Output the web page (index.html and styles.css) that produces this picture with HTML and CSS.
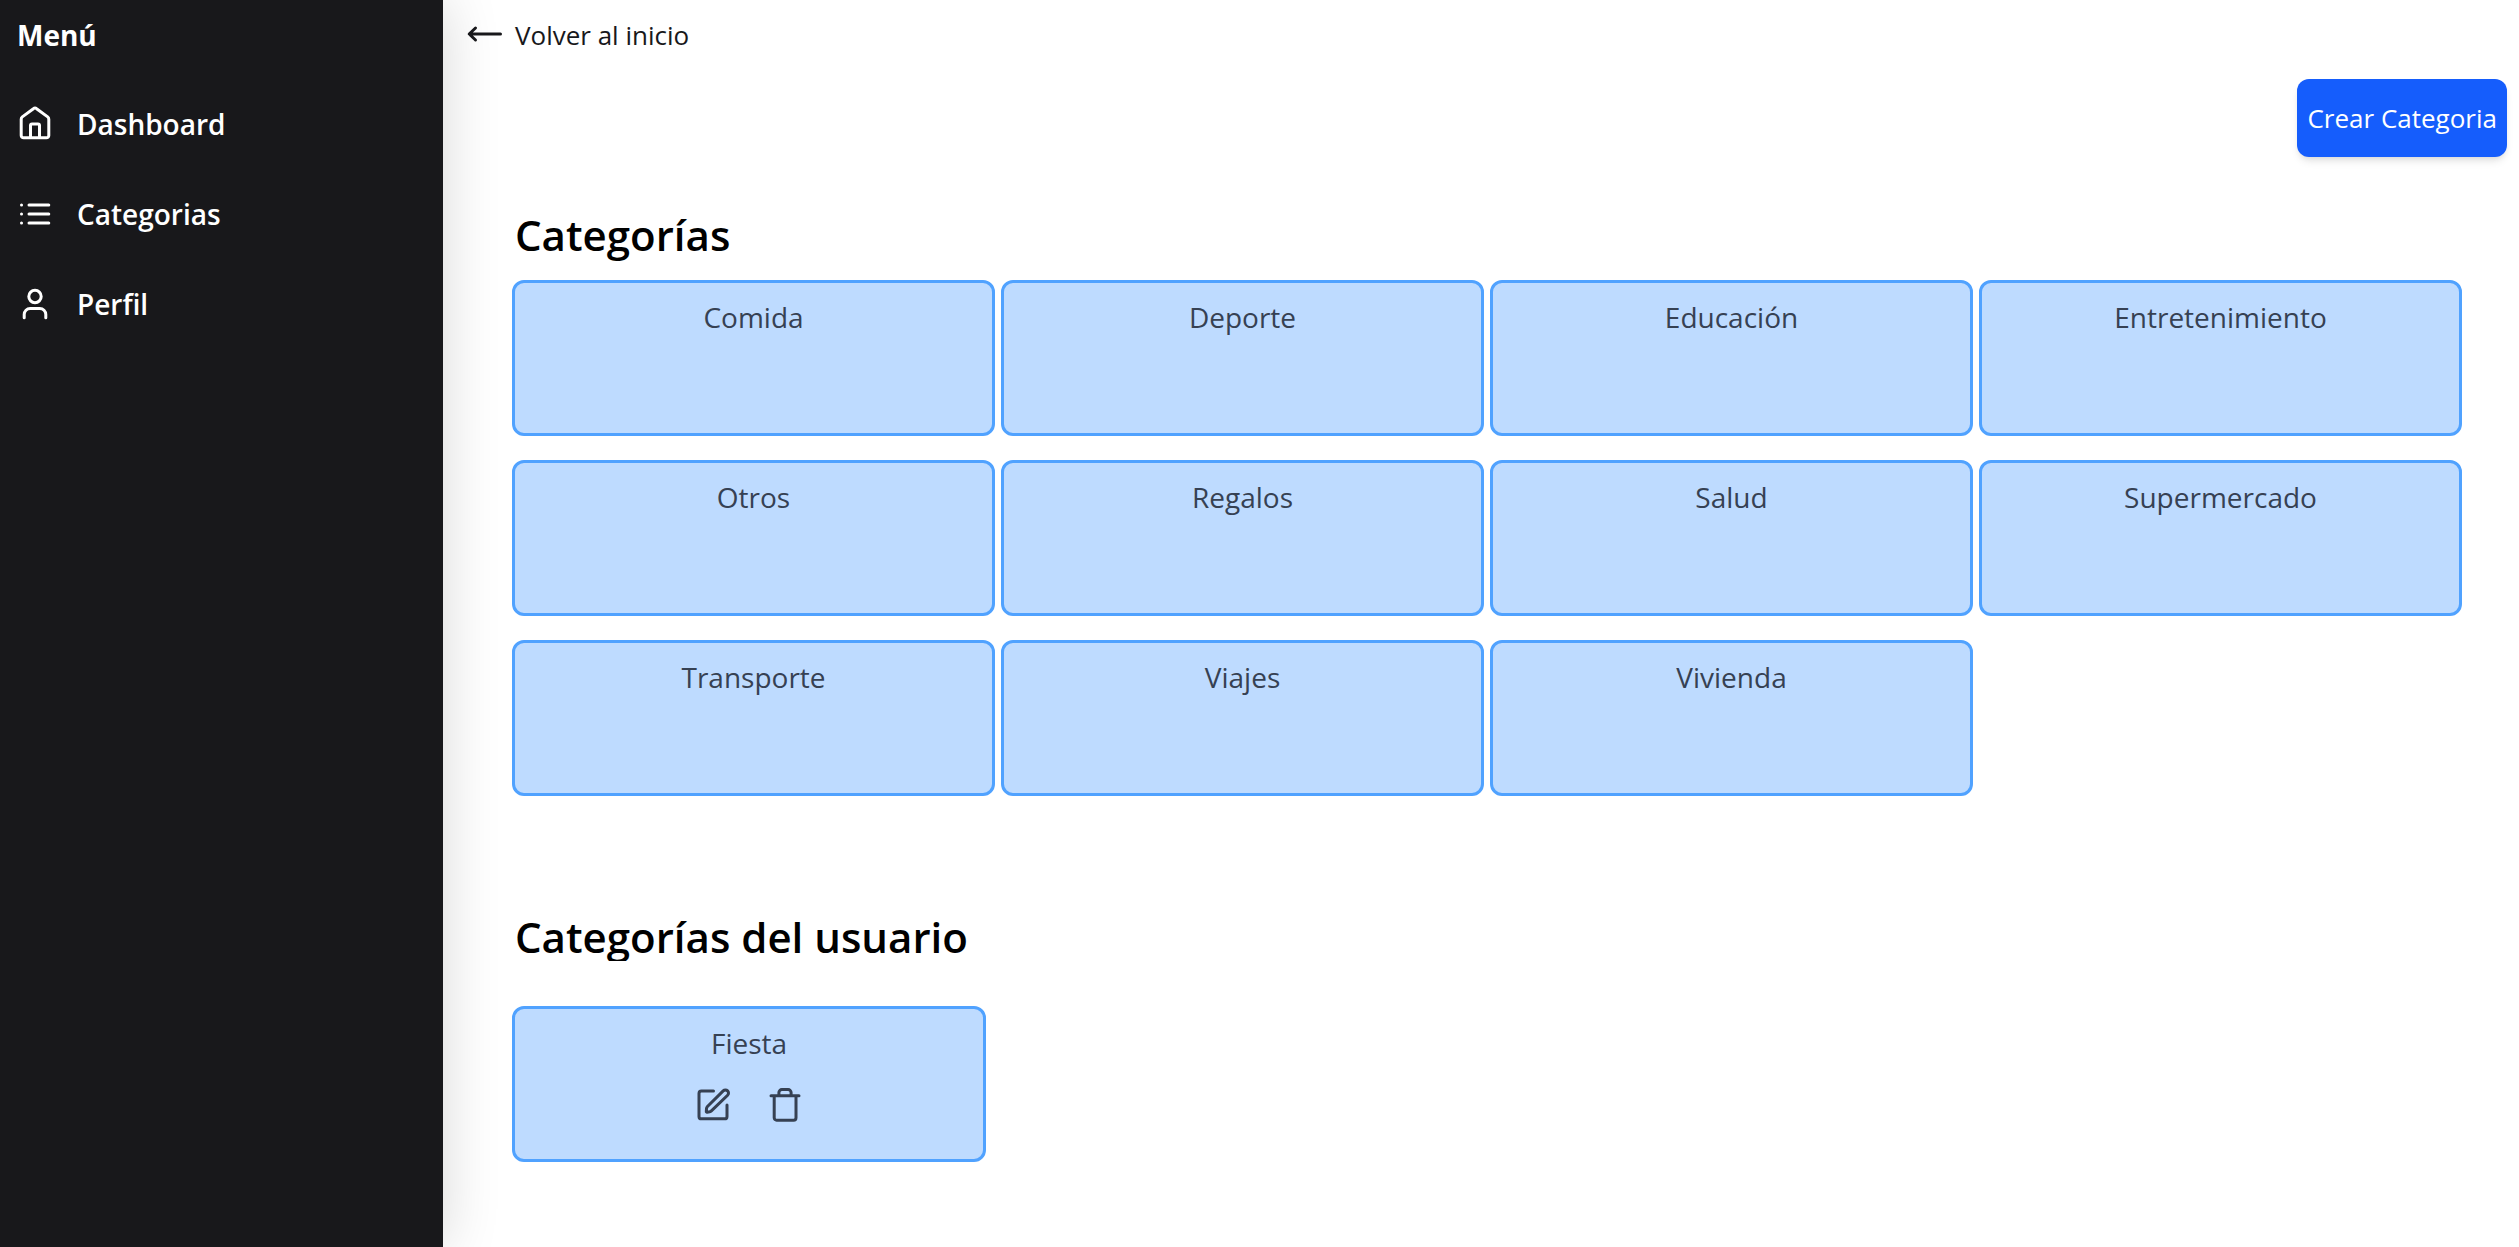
FILE: index.html
```html
<!DOCTYPE html>
<html lang="es">
<head>
  <meta charset="utf-8">
  <meta name="viewport" content="width=device-width, initial-scale=1">
  <title>Categorías</title>
  <link rel="stylesheet" href="styles.css">
</head>
<body>
  <div class="layout">
    <aside class="sidebar">
      <h1 class="sidebar-title">Menú</h1>
      <nav class="nav">
        <a class="nav-link" href="#dashboard">
          <svg class="icon" viewBox="0 0 36 36" aria-hidden="true"><path d="M13.5 31.5V19.5a1.5 1.5 0 0 1 1.5-1.5h6a1.5 1.5 0 0 1 1.5 1.5v12M4.2 13.2V29.4a2.4 2.4 0 0 0 2.4 2.4h22.8a2.4 2.4 0 0 0 2.4-2.4V13.2a3 3 0 0 0-1.1-2.3L19.6 2.7a2.5 2.5 0 0 0-3.2 0L5.3 10.9a3 3 0 0 0-1.1 2.3Z"/></svg>
          <span>Dashboard</span>
        </a>
        <a class="nav-link" href="#categorias">
          <svg class="icon" viewBox="0 0 36 36" aria-hidden="true"><path d="M12 9h19.8M12 18h19.8M12 27h19.8M4.5 9h.02M4.5 18h.02M4.5 27h.02"/></svg>
          <span>Categorias</span>
        </a>
        <a class="nav-link" href="#perfil">
          <svg class="icon" viewBox="0 0 36 36" aria-hidden="true"><circle cx="18" cy="10.5" r="6.2"/><path d="M7.2 31.8v-3.3a6 6 0 0 1 6-6h9.6a6 6 0 0 1 6 6v3.3"/></svg>
          <span>Perfil</span>
        </a>
      </nav>
    </aside>

    <main class="main">
      <a class="back-link" href="#inicio">
        <svg class="icon" viewBox="0 0 36 36" aria-hidden="true"><path d="M33.5 17H2.5M8.5 11l-6.3 6 6.3 6"/></svg>
        <span>Volver al inicio</span>
      </a>
      <div class="actions">
        <button class="create-button" type="button">Crear Categoria</button>
      </div>

      <section class="section">
        <h2 class="section-title">Categorías</h2>
        <ul class="cards">
          <li class="card">Comida</li>
          <li class="card">Deporte</li>
          <li class="card">Educación</li>
          <li class="card">Entretenimiento</li>
          <li class="card">Otros</li>
          <li class="card">Regalos</li>
          <li class="card">Salud</li>
          <li class="card">Supermercado</li>
          <li class="card">Transporte</li>
          <li class="card">Viajes</li>
          <li class="card">Vivienda</li>
        </ul>
      </section>

      <section class="section section-user">
        <h2 class="section-title">Categorías del usuario</h2>
        <ul class="cards">
          <li class="card">
            <span>Fiesta</span>
            <div class="card-actions">
              <button class="icon-button" type="button" aria-label="Editar">
                <svg class="icon" viewBox="0 0 36 36" aria-hidden="true"><path d="M18.5 5H6.4A2.4 2.4 0 0 0 4 7.4v23a2.4 2.4 0 0 0 2.4 2.4h23.2a2.4 2.4 0 0 0 2.4-2.4V19M12.2 20.8 28.2 4.9a3.1 3.1 0 0 1 4.4 4.4L16.4 24.8a3.5 3.5 0 0 1-1.7.9l-2.7.5a.6.6 0 0 1-.7-.7l.2-2.8a3.5 3.5 0 0 1 .7-1.9Z"/></svg>
              </button>
              <button class="icon-button" type="button" aria-label="Eliminar">
                <svg class="icon" viewBox="0 0 36 36" aria-hidden="true"><path d="M4 9.7h28M7.2 9.7v22.1a2.4 2.4 0 0 0 2.4 2.4h17a2.4 2.4 0 0 0 2.4-2.4V9.7M11.9 9.7V6.6a3 3 0 0 1 3-3h6.2a3 3 0 0 1 3 3v3.1"/></svg>
              </button>
            </div>
          </li>
        </ul>
      </section>
    </main>
  </div>
</body>
</html>
```
FILE: styles.css
```css
*,
*::before,
*::after {
  box-sizing: border-box;
}

body {
  margin: 0;
  background: #fff;
  color: #000;
  font-family: "Segoe UI", "Open Sans", "Noto Sans", sans-serif;
}

h1,
h2,
ul {
  margin: 0;
  padding: 0;
}

ul {
  list-style: none;
}

a {
  color: inherit;
  text-decoration: none;
}

button {
  font: inherit;
  color: inherit;
  border: 0;
  cursor: pointer;
}

.icon {
  display: block;
  flex: none;
  width: 36px;
  height: 36px;
  fill: none;
  stroke: currentColor;
  stroke-width: 3;
  stroke-linecap: round;
  stroke-linejoin: round;
}

.layout {
  display: grid;
  grid-template-columns: minmax(240px, 443fr) 2076fr;
  min-height: 100vh;
}

.sidebar {
  padding: 15px 17px;
  background: #18181b;
  color: #fff;
  box-shadow: 0 0 54px rgba(0, 0, 0, 0.16);
}

.sidebar-title {
  font-size: 28px;
  line-height: 40px;
  font-weight: 700;
}

.nav {
  display: flex;
  flex-direction: column;
  gap: 54px;
  margin-top: 51px;
}

.nav-link {
  display: flex;
  align-items: center;
  gap: 24px;
  font-size: 28px;
  line-height: 36px;
  font-weight: 600;
}

.main {
  min-width: 0;
}

.back-link {
  display: flex;
  align-items: center;
  gap: 12px;
  width: fit-content;
  padding: 15px 24px 0;
  color: #18181b;
  font-size: 26px;
  line-height: 40px;
}

.actions {
  display: flex;
  justify-content: flex-end;
  padding: 24px 12px 0;
}

.create-button {
  padding: 19px 10px;
  border-radius: 12px;
  background: #155dfc;
  color: #fff;
  font-size: 26px;
  line-height: 40px;
  box-shadow: 0 6px 9px -2px rgba(0, 0, 0, 0.1), 0 3px 6px -3px rgba(0, 0, 0, 0.1);
}

.section {
  margin: 48px 57px 0 69px;
}

.section-title {
  margin-bottom: 15px;
  padding-left: 3px;
  font-size: 42px;
  line-height: 60px;
  font-weight: 600;
}

.cards {
  display: grid;
  grid-template-columns: repeat(4, minmax(0, 1fr));
  gap: 24px 6px;
}

.card {
  min-height: 156px;
  padding: 15px;
  border: 3px solid #50a2ff;
  border-radius: 12px;
  background: #bedbff;
  color: #364153;
  font-size: 28px;
  line-height: 38px;
  text-align: center;
}

.section-user {
  margin-top: 111px;
}

.section-user .section-title {
  height: 54px;
  margin-bottom: 45px;
  overflow: hidden;
}

.section-user .cards {
  column-gap: 18px;
}

.card-actions {
  display: flex;
  justify-content: center;
  gap: 36px;
  margin-top: 24px;
}

.icon-button {
  padding: 0;
  background: none;
}
```
